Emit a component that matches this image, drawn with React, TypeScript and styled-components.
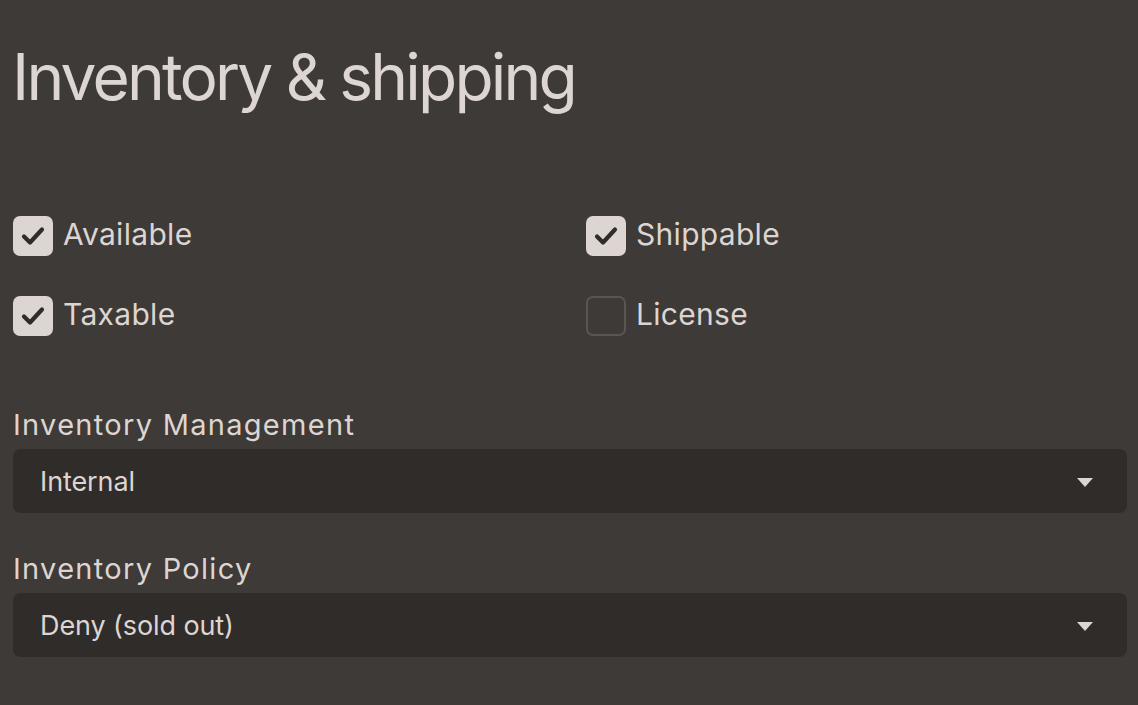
import React from "react";
import styled, {createGlobalStyle} from "styled-components";

const GlobalStyle = createGlobalStyle`
    html, body {
        margin: 0;
        padding: 0;
        background-color: #3e3a38;
    }

    body {
        font-family: "Inter", "Noto Sans", sans-serif;
        color: #ddd5d1;
    }
`;

const Page = styled.div`
    min-height: 705px;
    box-sizing: border-box;
    padding: 0 11px 0 13px;
    display: flex;
    flex-direction: column;
`;

const Title = styled.h1`
    margin: 38px 0 0 -1px;
    font-size: 64px;
    font-weight: 400;
    line-height: 78px;
    letter-spacing: -2.8px;
`;

const CheckGrid = styled.div`
    display: grid;
    grid-template-columns: 1fr 1fr;
    column-gap: 32px;
    row-gap: 40px;
    margin-top: 100px;
`;

const CheckRow = styled.label`
    display: flex;
    align-items: center;
    gap: 10px;
    height: 40px;
    font-size: 30px;
    letter-spacing: 0.3px;
`;

const CheckText = styled.span`
    line-height: 32px;
    padding-bottom: 4px;
`;

const Box = styled.span<{ $checked: boolean }>`
    width: 40px;
    height: 40px;
    box-sizing: border-box;
    border-radius: 7px;
    display: flex;
    align-items: center;
    justify-content: center;
    background-color: ${({$checked}) => ($checked ? "#ddd5d1" : "transparent")};
    border: 2px solid ${({$checked}) => ($checked ? "#ddd5d1" : "#5a5552")};
`;

const Field = styled.div`
    display: flex;
    flex-direction: column;
    gap: 2px;
`;

const Fields = styled.div`
    display: flex;
    flex-direction: column;
    gap: 34px;
    margin-top: 67px;
`;

const FieldLabel = styled.span`
    font-size: 29px;
    line-height: 44px;
    letter-spacing: 1.3px;
`;

const Select = styled.div`
    height: 64px;
    border-radius: 8px;
    background-color: #302c2a;
    display: flex;
    align-items: center;
    justify-content: space-between;
    padding: 0 34px 0 27px;
    font-size: 27px;
    letter-spacing: -0.1px;
`;

const Arrow = styled.span`
    width: 0;
    height: 0;
    border-left: 8px solid transparent;
    border-right: 8px solid transparent;
    border-top: 9px solid #ddd5d1;
    margin-top: 2px;
`;

const checks = [
    {label: "Available", checked: true},
    {label: "Shippable", checked: true},
    {label: "Taxable", checked: true},
    {label: "License", checked: false},
];

const selects = [
    {label: "Inventory Management", value: "Internal"},
    {label: "Inventory Policy", value: "Deny (sold out)"},
];

const CheckIcon = () => (
    <svg width="26" height="26" viewBox="0 0 26 26">
        <path d="M4 13.5 L10 19.5 L22 6.5" fill="none" stroke="#302c2a" strokeWidth="4.2"
              strokeLinecap="round" strokeLinejoin="round"/>
    </svg>
);

export default function App() {
    return (
        <Page>
            <GlobalStyle/>
            <Title>Inventory &amp; shipping</Title>
            <CheckGrid>
                {checks.map(c => (
                    <CheckRow key={c.label}>
                        <Box $checked={c.checked}>{c.checked && <CheckIcon/>}</Box>
                        <CheckText>{c.label}</CheckText>
                    </CheckRow>
                ))}
            </CheckGrid>
            <Fields>
                {selects.map(s => (
                    <Field key={s.label}>
                        <FieldLabel>{s.label}</FieldLabel>
                        <Select>
                            {s.value}
                            <Arrow/>
                        </Select>
                    </Field>
                ))}
            </Fields>
        </Page>
    );
}
